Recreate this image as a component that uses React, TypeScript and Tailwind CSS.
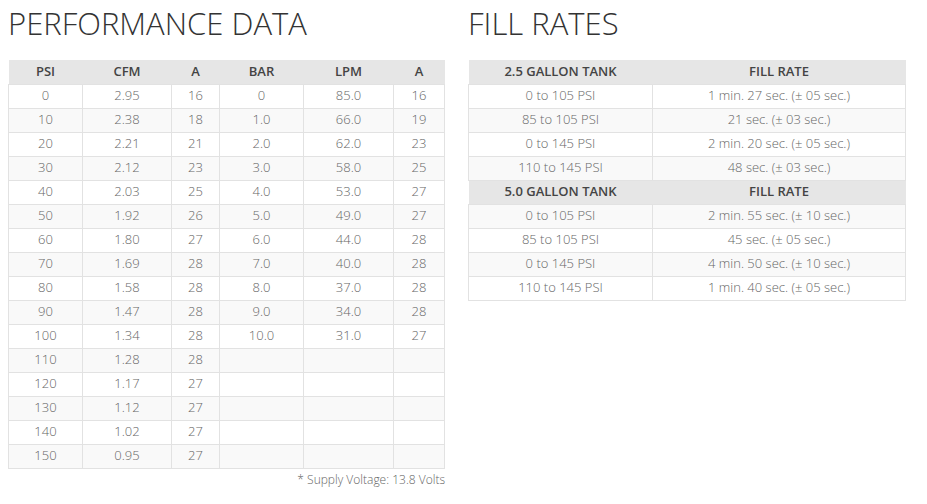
const PERF = [
  ["0", "2.95", "16", "0", "85.0", "16"],
  ["10", "2.38", "18", "1.0", "66.0", "19"],
  ["20", "2.21", "21", "2.0", "62.0", "23"],
  ["30", "2.12", "23", "3.0", "58.0", "25"],
  ["40", "2.03", "25", "4.0", "53.0", "27"],
  ["50", "1.92", "26", "5.0", "49.0", "27"],
  ["60", "1.80", "27", "6.0", "44.0", "28"],
  ["70", "1.69", "28", "7.0", "40.0", "28"],
  ["80", "1.58", "28", "8.0", "37.0", "28"],
  ["90", "1.47", "28", "9.0", "34.0", "28"],
  ["100", "1.34", "28", "10.0", "31.0", "27"],
  ["110", "1.28", "28", "", "", ""],
  ["120", "1.17", "27", "", "", ""],
  ["130", "1.12", "27", "", "", ""],
  ["140", "1.02", "27", "", "", ""],
  ["150", "0.95", "27", "", "", ""],
];

const PERF_COLS = [
  { label: "PSI", w: "w-[74px]" },
  { label: "CFM", w: "w-[89px]" },
  { label: "A", w: "w-[48px]" },
  { label: "BAR", w: "w-[84px]" },
  { label: "LPM", w: "w-[90px]" },
  { label: "A", w: "w-[51px]" },
];

const FILL = [
  {
    tank: "2.5 GALLON TANK",
    rows: [
      ["0 to 105 PSI", "1 min. 27 sec. (± 05 sec.)"],
      ["85 to 105 PSI", "21 sec. (± 03 sec.)"],
      ["0 to 145 PSI", "2 min. 20 sec. (± 05 sec.)"],
      ["110 to 145 PSI", "48 sec. (± 03 sec.)"],
    ],
  },
  {
    tank: "5.0 GALLON TANK",
    rows: [
      ["0 to 105 PSI", "2 min. 55 sec. (± 10 sec.)"],
      ["85 to 105 PSI", "45 sec. (± 05 sec.)"],
      ["0 to 145 PSI", "4 min. 50 sec. (± 10 sec.)"],
      ["110 to 145 PSI", "1 min. 40 sec. (± 05 sec.)"],
    ],
  },
];

const th = "h-6 p-0 bg-[#e6e6e6] text-[13px] font-semibold text-[#444] text-center";
const td = "h-6 p-0 border border-[#e2e2e2] text-[13px] font-light text-[#666] text-center";

export default function App() {
  return (
    <div className="flex gap-[23px] px-2 pt-[3px] bg-white min-h-[504px] font-['Open_Sans',sans-serif]">
      <div className="w-[437px]">
        <h2 className="text-[31px] font-light leading-[40px] text-[#333]">PERFORMANCE DATA</h2>
        <table className="mt-[17px] border-collapse table-fixed w-[437px]">
          <thead>
            <tr>
              {PERF_COLS.map((c, i) => (
                <th key={i} className={`${th} ${c.w}`}>
                  {c.label}
                </th>
              ))}
            </tr>
          </thead>
          <tbody>
            {PERF.map((row, r) => (
              <tr key={r} className={r % 2 ? "bg-[#f9f9f9]" : "bg-white"}>
                {row.map((v, i) => (
                  <td key={i} className={td}>
                    {v}
                  </td>
                ))}
              </tr>
            ))}
          </tbody>
        </table>
        <p className="mt-[2px] text-right text-[12px] font-light text-[#666]">* Supply Voltage: 13.8 Volts</p>
      </div>

      <div className="w-[437px]">
        <h2 className="text-[31px] font-light leading-[40px] text-[#333]">FILL RATES</h2>
        <table className="mt-[17px] border-collapse table-fixed w-[437px]">
          <tbody>
            {FILL.map((block) => [
              <tr key={block.tank}>
                <th className={`${th} w-[184px]`}>{block.tank}</th>
                <th className={`${th} w-[253px]`}>FILL RATE</th>
              </tr>,
              ...block.rows.map((row, r) => (
                <tr
                  key={block.tank + r}
                  className={(block.tank.startsWith("2.5") ? r % 2 : (r + 1) % 2) ? "bg-[#f9f9f9]" : "bg-white"}
                >
                  <td className={td}>{row[0]}</td>
                  <td className={td}>{row[1]}</td>
                </tr>
              )),
            ])}
          </tbody>
        </table>
      </div>
    </div>
  );
}
